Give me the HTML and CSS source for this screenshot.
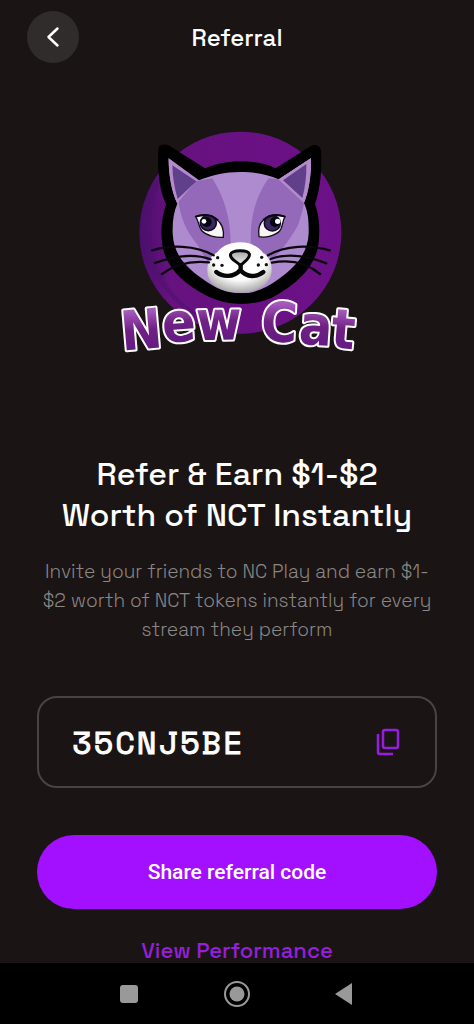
FILE: index.html
```html
<!DOCTYPE html>
<html lang="en">
<head>
    <meta charset="UTF-8">
    <meta name="viewport" content="width=device-width, initial-scale=1.0">
    <title>Referral</title>
    <link rel="stylesheet" href="styles.css">
</head>
<body>
    <header class="header">
        <button type="button" class="back-btn" aria-label="Back">
            <svg width="24" height="24" viewBox="0 0 24 24"><path d="M16.500 3.500L7.500 12L16.500 20.500"/></svg>
        </button>
        <h1>Referral</h1>
    </header>

    <main class="content">
        <svg class="logo" viewBox="-18 0 768 720" role="img" aria-label="New Cat">
            <defs>
                <linearGradient id="disc">
                    <stop offset="0" stop-color="#4b0e6c"/>
                    <stop offset="0.15" stop-color="#66127f"/>
                    <stop offset="1" stop-color="#6d1088"/>
                </linearGradient>
                <linearGradient id="letters" x1="0" y1="0" x2="0" y2="1">
                    <stop offset="0.2" stop-color="#a55abc"/>
                    <stop offset="0.5" stop-color="#702083"/>
                    <stop offset="1" stop-color="#5d1684"/>
                </linearGradient>
                <radialGradient id="muzzle" cx="0.5" cy="0.35" r="0.65">
                    <stop offset="0.6" stop-color="#ffffff"/>
                    <stop offset="1" stop-color="#aaa9a8"/>
                </radialGradient>
                <linearGradient id="nose" x1="0" y1="0" x2="0" y2="1">
                    <stop offset="0" stop-color="#a5a5a5"/>
                    <stop offset="1" stop-color="#f2f2f2"/>
                </linearGradient>
                <clipPath id="face">
                    <path d="M376 156C330 156 288 166 252 181L160 114C162 165 169 213 187 251C176 275 172 305 173 340C175 400 208 438 260 475C300 505 335 520 377 520C420 520 456 504 494 475C545 438 579 398 581 340C582 304 579 273 567 249C583 210 589 160 588 114L491 178C457 164 421 156 376 156Z"/>
                </clipPath>
            </defs>
            <circle cx="376" cy="338" r="303" fill="url(#disc)"/>
            <path d="M113 190C64 280 66 400 136 493C175 550 225 584 280 598C220 570 160 520 129 440C97 355 100 260 145 166Z" fill="#4c126e" opacity="0.55"/>
            <!-- head outline -->
            <path d="M131 82C137 70 158 72 170 82L270 145C335 117 420 116 482 145L584 80C598 69 617 76 618 92C622 150 615 208 600 252C613 288 615 326 611 367C603 440 547 488 487 524C421 562 338 560 272 526C202 488 148 439 141 366C136 324 142 286 153 253C132 208 126 144 131 82Z" fill="#000"/>
            <g clip-path="url(#face)">
                <path d="M150 100H600V530H150Z" fill="#ad8bce"/>
                <path d="M210 190L292 175C330 235 348 300 347 380L286 440L248 375C213 335 195 290 190 238Z" fill="#9469b9"/>
                <path d="M461 175L555 184C578 214 568 262 548 318C523 360 501 389 474 418L408 370C403 296 423 227 461 175Z" fill="#9469b9"/>
                <path d="M160 114L246 180L187 249L155 220Z" fill="#b68bcc"/>
                <path d="M588 114L490 178L567 249L600 210Z" fill="#b68bcc"/>
                <path d="M172 136L244 184L188 237C178 205 173 171 172 136Z" fill="#61408b"/>
                <path d="M574 132L504 181L562 234C571 199 575 167 574 132Z" fill="#61408b"/>
            </g>
            <!-- eyes -->
            <g stroke="#110d19" stroke-width="4">
                <path d="M242 290C265 283 289 285 306 299C324 313 327 332 325 352C302 353 275 347 262 334C251 323 252 304 242 290Z" fill="#f7f6f4"/>
                <path d="M510 290C486 282 461 285 446 299C430 313 429 331 432 350C452 354 481 347 494 333C505 321 501 304 510 290Z" fill="#f7f6f4"/>
            </g>
            <g fill="#3b2863" stroke="#120d25" stroke-width="5">
                <ellipse cx="280" cy="309" rx="24" ry="23"/>
                <ellipse cx="472" cy="310" rx="24" ry="23"/>
            </g>
            <circle cx="275" cy="306" r="15" fill="#05060e"/>
            <circle cx="480" cy="306" r="15" fill="#05060e"/>
            <circle cx="267" cy="304" r="7" fill="#fff"/>
            <circle cx="488" cy="304" r="8" fill="#fff"/>
            <path d="M242 290C263 281 290 283 309 301M510 290C486 282 463 284 445 300" fill="none" stroke="#08070d" stroke-width="6"/>
            <!-- muzzle -->
            <path d="M374 367C403 366 429 378 444 399C464 410 473 435 469 460C464 494 423 518 376 518C326 519 281 496 278 462C274 433 283 409 307 397C323 376 346 368 374 367Z" fill="url(#muzzle)"/>
            <path d="M347 402C352 390 397 388 403 402C407 415 387 424 377 437C367 425 342 417 347 402Z" fill="url(#nose)" stroke="#070707" stroke-width="9"/>
            <path d="M377 437V452M304 456C321 470 355 475 376 450C396 474 425 472 445 456" fill="none" stroke="#070707" stroke-width="13" stroke-linecap="round" stroke-linejoin="round"/>
            <g fill="#111">
                <circle cx="308" cy="413" r="5"/><circle cx="296" cy="435" r="5"/><circle cx="321" cy="436" r="5"/>
                <circle cx="440" cy="412" r="5"/><circle cx="430" cy="435" r="5"/><circle cx="454" cy="434" r="5"/>
            </g>
            <g fill="none" stroke="#09070b" stroke-width="7" stroke-linecap="round">
                <path d="M296 406C240 374 165 375 112 391M287 418C231 397 166 412 120 429M282 427C218 420 175 437 141 462"/>
                <path d="M459 406C512 375 583 374 644 391M467 417C525 396 583 410 634 430M471 428C528 417 578 431 615 462"/>
            </g>
            <g class="logo-text">
                <text transform="translate(22 692) rotate(-5)">N</text>
                <text transform="translate(145 668) rotate(-4)">e</text>
                <text transform="translate(244 661) rotate(-1)">w</text>
                <text transform="translate(436 662) rotate(3)">C</text>
                <text transform="translate(549 671) rotate(4)">a</text>
                <text transform="translate(645 682) rotate(5)">t</text>
            </g>
        </svg>

        <h2>Refer &amp; Earn $1-$2 Worth of NCT Instantly</h2>
        <p class="description">Invite your friends to NC Play and earn $1-<wbr>$2 worth of NCT tokens instantly for every stream they perform</p>

        <div class="code-box">
            <span class="code">35CNJ5BE</span>
            <button type="button" class="copy-btn" aria-label="Copy referral code">
                <svg width="28" height="28" viewBox="0 0 28 28"><rect x="9" y="2" width="15" height="18" rx="2"/><path d="M4 6V24Q4 26 6 26H19"/></svg>
            </button>
        </div>

        <button type="button" class="share-btn">Share referral code</button>
        <a href="#" class="performance-link">View Performance</a>
    </main>

    <nav class="system-nav">
        <button type="button" aria-label="Recent apps">
            <svg width="28" height="28" viewBox="0 0 28 28"><rect x="5" y="5" width="18" height="18" rx="3" fill="#999"/></svg>
        </button>
        <button type="button" aria-label="Home">
            <svg width="28" height="28" viewBox="0 0 28 28"><circle cx="14" cy="14" r="12" fill="none" stroke="#999" stroke-width="2"/><circle cx="14" cy="14" r="7.500" fill="#999"/></svg>
        </button>
        <button type="button" aria-label="Back">
            <svg width="28" height="28" viewBox="0 0 28 28"><path d="M4 14L21 3V25Z" fill="#999"/></svg>
        </button>
    </nav>
</body>
</html>
```
FILE: styles.css
```css
* {
    margin: 0;
    padding: 0;
    box-sizing: border-box;
}

body {
    font-family: 'Space Grotesk', Inter, sans-serif;
    background: #1a1514;
    color: white;
    min-height: 100vh;
    display: flex;
    flex-direction: column;
}

button {
    border: none;
    background: none;
    cursor: pointer;
}

svg {
    display: block;
}

.header {
    display: grid;
    grid-template-columns: 52px 1fr 52px;
    align-items: center;
    padding: 11px 27px;
}

.header h1 {
    text-align: center;
    font-size: 24px;
    font-weight: 500;
}

.back-btn {
    width: 52px;
    height: 52px;
    border-radius: 50%;
    background: #302c2b;
    display: grid;
    place-items: center;
}

.back-btn svg {
    fill: none;
    stroke: white;
    stroke-width: 2.5;
    stroke-linecap: round;
    stroke-linejoin: round;
}

.content {
    flex: 1;
    display: flex;
    flex-direction: column;
    padding: 46px 37px 0;
    text-align: center;
}

.logo {
    width: 256px;
    margin: 0 auto 94px;
    overflow: visible;
}

.logo-text {
    font-family: 'DejaVu Sans Condensed', 'DejaVu Sans', sans-serif;
    font-size: 165px;
    font-weight: 700;
    fill: url(#letters);
    stroke: white;
    stroke-width: 12px;
    stroke-linejoin: round;
    paint-order: stroke;
}

h2 {
    font-size: 32px;
    line-height: 41px;
    font-weight: 500;
    padding: 0 16px;
    margin-bottom: 21px;
}

.description {
    color: #8b8786;
    font-size: 19px;
    font-weight: 300;
    line-height: 29px;
    margin-bottom: 52px;
}

.code-box {
    display: flex;
    align-items: center;
    justify-content: space-between;
    height: 92px;
    padding: 0 33px;
    border: 2px solid #484443;
    border-radius: 20px;
    margin-bottom: 47px;
}

.code {
    font-family: 'Space Mono', 'Liberation Mono', monospace;
    font-size: 32px;
    line-height: 44px;
    letter-spacing: 2px;
    -webkit-text-stroke: 1px white;
}

.copy-btn svg {
    fill: none;
    stroke: #981edf;
    stroke-width: 2.5;
}

.share-btn {
    height: 74px;
    border-radius: 37px;
    background: #a30fff;
    color: white;
    font-family: Roboto, sans-serif;
    font-size: 21px;
    font-weight: 500;
    margin-bottom: 28px;
}

.performance-link {
    color: #981edf;
    font-size: 22px;
    font-weight: 500;
    line-height: 26px;
    text-decoration: none;
}

.system-nav {
    display: flex;
    justify-content: center;
    align-items: center;
    gap: 80px;
    height: 61px;
    background: black;
}
```
